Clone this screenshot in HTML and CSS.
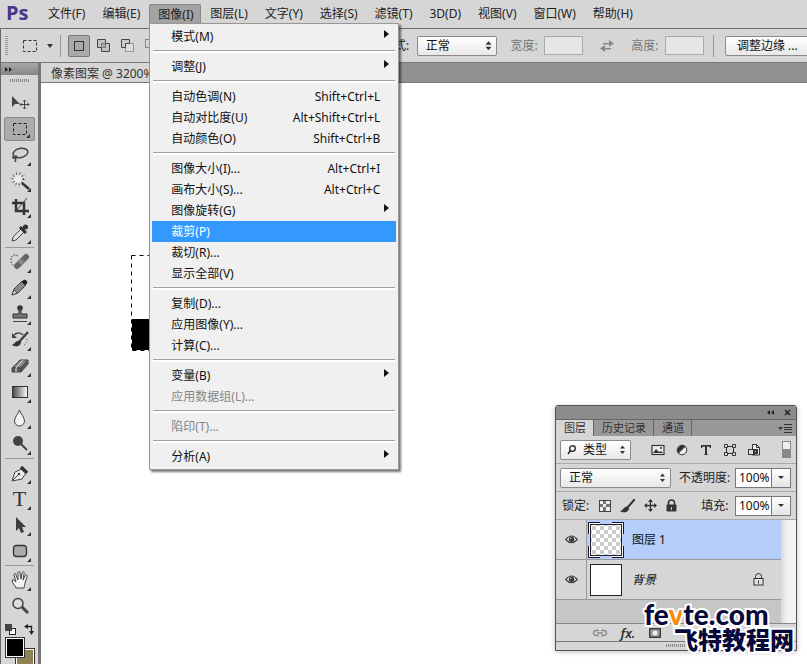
FILE: index.html
```html
<!DOCTYPE html>
<html lang="zh-CN">
<head>
<meta charset="utf-8">
<title>像素图案</title>
<link rel="stylesheet" href="styles.css">
</head>
<body>
<div class="app">
  <nav class="menubar">
    <span class="logo">Ps</span>
    <div class="menu"><button>文件(F)</button></div>
    <div class="menu"><button>编辑(E)</button></div>
    <div class="menu open"><button>图像(I)</button>
      <ul class="dropdown">
        <li><button class="sub">模式(M)</button></li>
        <li class="line"></li>
        <li><button class="sub">调整(J)</button></li>
        <li class="line"></li>
        <li><button>自动色调(N)<kbd>Shift+Ctrl+L</kbd></button></li>
        <li><button>自动对比度(U)<kbd>Alt+Shift+Ctrl+L</kbd></button></li>
        <li><button>自动颜色(O)<kbd>Shift+Ctrl+B</kbd></button></li>
        <li class="line"></li>
        <li><button>图像大小(I)...<kbd>Alt+Ctrl+I</kbd></button></li>
        <li><button>画布大小(S)...<kbd>Alt+Ctrl+C</kbd></button></li>
        <li><button class="sub">图像旋转(G)</button></li>
        <li><button class="current">裁剪(P)</button></li>
        <li><button>裁切(R)...</button></li>
        <li><button>显示全部(V)</button></li>
        <li class="line"></li>
        <li><button>复制(D)...</button></li>
        <li><button>应用图像(Y)...</button></li>
        <li><button>计算(C)...</button></li>
        <li class="line"></li>
        <li><button class="sub">变量(B)</button></li>
        <li><button disabled>应用数据组(L)...</button></li>
        <li class="line"></li>
        <li><button disabled>陷印(T)...</button></li>
        <li class="line"></li>
        <li><button class="sub">分析(A)</button></li>
      </ul>
    </div>
    <div class="menu"><button>图层(L)</button></div>
    <div class="menu"><button>文字(Y)</button></div>
    <div class="menu"><button>选择(S)</button></div>
    <div class="menu"><button>滤镜(T)</button></div>
    <div class="menu"><button>3D(D)</button></div>
    <div class="menu"><button>视图(V)</button></div>
    <div class="menu"><button>窗口(W)</button></div>
    <div class="menu"><button>帮助(H)</button></div>
  </nav>

  <div class="options">
    <div class="modes">
      <span class="grip"></span>
      <button class="preset" aria-label="矩形选框"><svg width="32" height="14" viewBox="0 0 32 14"><rect x="1.500" y="1.500" width="13" height="11" fill="none" stroke="#333" stroke-dasharray="3 2"/><path d="M25 5h6l-3 4z" fill="#333"/></svg></button>
      <span class="divider"></span>
      <button class="mode on" aria-label="新选区"><svg width="14" height="14" viewBox="0 0 14 14"><rect x="2.500" y="2.500" width="9" height="9" fill="#aaa" stroke="#333"/></svg></button>
      <button class="mode" aria-label="添加到选区"><svg width="14" height="14" viewBox="0 0 14 14"><path d="M.5.5h8v4h4v8h-8v-4h-4z" fill="#c2c2c2" stroke="#444"/><path d="M4.500 8.500v-4h4v4z" fill="#aaa" stroke="#777"/></svg></button>
      <button class="mode" aria-label="从选区减去"><svg width="14" height="14" viewBox="0 0 14 14"><rect x="4.500" y="4.500" width="8" height="8" fill="#ddd" stroke="#999"/><path d="M.5.5h8v4h-4v4h-4z" fill="#ccc" stroke="#444"/></svg></button>
      <button class="mode" aria-label="与选区交叉"><svg width="14" height="14" viewBox="0 0 14 14"><rect x=".5" y=".5" width="8" height="8" fill="none" stroke="#888"/><rect x="4.500" y="4.500" width="8" height="8" fill="none" stroke="#888"/></svg></button>
    </div>
    <label for="style">样式:</label>
    <span class="pick style"><select id="style"><option>正常</option></select><svg width="7" height="10" viewBox="0 0 7 10"><path d="M1 3.500L3.500.5 6 3.500zM1 6h5L3.500 9z" fill="#333" stroke="#333" stroke-width=".5"/></svg></span>
    <label class="dim" for="w">宽度:</label><input class="size" id="w" disabled>
    <button class="swap" aria-label="交换"><svg width="16" height="14" viewBox="0 0 16 14"><path d="M4 4h6V1l5 3.500L10 8V5.500H4zM12 9H6V6L1 9.500 6 13v-2.500h6z" fill="#8a8a8a"/></svg></button>
    <label class="dim" for="h">高度:</label><input class="size" id="h" disabled>
    <span class="divider end"></span>
    <button class="refine">调整边缘 ...</button>
  </div>

  <div class="work">
    <aside class="tools">
      <div class="toolhead"><svg width="8" height="5" viewBox="0 0 8 5"><path d="M0 0l3 2.500L0 5zM4 0l3 2.500L4 5z" fill="#222"/></svg></div>
      <div class="toolgrip"></div>
      <button class="tool plain" aria-label="移动"><svg viewBox="0 0 20 20"><path d="M2 3v11l3-3h5z" fill="#444"/><path d="M14.500 7v9M10 11.500h9M13 8.500L14.500 7 16 8.500M13 14.500l1.500 1.500 1.500-1.500M11.500 10L10 11.500l1.500 1.500M17.500 10l1.500 1.500-1.500 1.500" fill="none" stroke="#444"/></svg></button>
      <button class="tool on" aria-label="矩形选框"><svg viewBox="0 0 20 20"><rect x="3.500" y="4.500" width="13" height="11" fill="none" stroke="#222" stroke-dasharray="3 2"/></svg></button>
      <button class="tool" aria-label="套索"><svg viewBox="0 0 20 20"><g fill="none" stroke="#444" stroke-width="1.500"><ellipse cx="10.500" cy="8" rx="7.500" ry="4.500" transform="rotate(-12 10.500 8)"/><path d="M4 11c-2 1-1 3 1 2s2-2 0-2M5 13c1 1 1 2 0 4"/></g></svg></button>
      <button class="tool" aria-label="魔棒"><svg viewBox="0 0 20 20"><circle cx="8" cy="8" r="5" fill="#ededed" stroke="#555" stroke-width="2" stroke-dasharray="1 2"/><circle cx="8" cy="8" r="7" fill="none" stroke="#777" stroke-dasharray="1 3.400"/><path d="M12 12l7 6" stroke="#333" stroke-width="2.500"/></svg></button>
      <button class="tool" aria-label="裁剪"><svg viewBox="0 0 20 20"><path d="M6 2v12h13M2 6h12v12" fill="none" stroke="#333" stroke-width="2.500"/><path d="M6 14L17 1" stroke="#444"/></svg></button>
      <button class="tool" aria-label="吸管"><svg viewBox="0 0 20 20"><path d="M2 18l1-4 8-8 3 3-8 8z" fill="#ddd" stroke="#444"/><path d="M10 4l6 6M12 7l4-4" stroke="#333" stroke-width="3"/><circle cx="15.500" cy="4" r="2.500" fill="#333"/></svg></button>
      <hr>
      <button class="tool" aria-label="修复画笔"><svg viewBox="0 0 20 20"><path d="M8 4c-4-3-7 0-7 4 0 3 1 5 3 6" fill="none" stroke="#333" stroke-dasharray="1.500 1.500"/><path d="M7 14l9-9" stroke="#666" stroke-width="6" stroke-linecap="round"/><path d="M10 11l3-3" stroke="#aaa" stroke-width="5" stroke-dasharray="1 1"/></svg></button>
      <button class="tool" aria-label="铅笔"><svg viewBox="0 0 20 20"><path d="M2 17l2-6 8-8 4 4-8 8z" fill="#888" stroke="#444"/><path d="M2 17l2-5 3 3z" fill="#eee" stroke="#444"/><path d="M12 4l2-2q3 0 3 3l-2 2z" fill="#222" stroke="#222"/></svg></button>
      <button class="tool" aria-label="图章"><svg viewBox="0 0 20 20"><circle cx="10" cy="4" r="2.800" fill="#333"/><path d="M9 5h2v5h6v4H3v-4h6z" fill="#777" stroke="#333"/><path d="M3 17.500h14" stroke="#444"/></svg></button>
      <button class="tool" aria-label="历史记录画笔"><svg viewBox="0 0 20 20"><path d="M4 5c3-3 8-2 9 0" fill="none" stroke="#444" stroke-width="1.500"/><path d="M2 3v5h5z" fill="#444"/><path d="M18 2L9 12" stroke="#444" stroke-width="2.500"/><path d="M10 11c-4-1-5 3-8 4 4 3 9 1 9-3z" fill="#333"/><path d="M17 9c0 4-2 6-5 7" fill="none" stroke="#555" stroke-dasharray="1 2"/></svg></button>
      <button class="tool" aria-label="橡皮擦"><svg viewBox="0 0 20 20"><path d="M2 12l8-8h8l-7 8z" fill="#888" stroke="#444"/><path d="M2 12h9v4H2zM11 12l7-8v4l-7 8z" fill="#5c5c5c" stroke="#444"/><path d="M6 16v-4l7-8" fill="none" stroke="#ddd"/></svg></button>
      <button class="tool" aria-label="渐变"><svg viewBox="0 0 20 20"><defs><linearGradient id="ramp"><stop stop-color="#444"/><stop offset="1" stop-color="#fff"/></linearGradient></defs><rect x="2.500" y="4.500" width="15" height="11" fill="url(#ramp)" stroke="#333"/></svg></button>
      <button class="tool" aria-label="模糊"><svg viewBox="0 0 20 20"><path d="M9.500 2c-1 4-5 7-5 11a5 5 0 0 0 10 0c0-4-4-7-5-11z" fill="#f4f4f4" stroke="#444"/></svg></button>
      <button class="tool" aria-label="减淡"><svg viewBox="0 0 20 20"><circle cx="8" cy="7" r="5" fill="#444"/><path d="M11 10l6 6" stroke="#444" stroke-width="2"/></svg></button>
      <hr>
      <button class="tool" aria-label="钢笔"><svg viewBox="0 0 20 20"><path d="M2 18L5 9l7-3 4 4-4 6z" fill="#eee" stroke="#444"/><path d="M3 17l5-5" stroke="#444"/><circle cx="9" cy="11" r="1.300" fill="#444"/><path d="M11 4l6 6" stroke="#333" stroke-width="3.500"/></svg></button>
      <button class="tool type" aria-label="文字">T</button>
      <button class="tool" aria-label="路径选择"><svg viewBox="0 0 20 20"><path d="M6 2v14l3-3 2 5 3-1-2-5h4z" fill="#3b3b3b"/></svg></button>
      <button class="tool" aria-label="圆角矩形"><svg viewBox="0 0 20 20"><rect x="3.500" y="4.500" width="13" height="11" rx="3" fill="#aaa" stroke="#333" stroke-width="1.300"/></svg></button>
      <hr>
      <button class="tool" aria-label="抓手"><svg viewBox="0 0 20 20"><path d="M6 18c-1-3-4-5-4-8 1-1 2 0 4 2L4 5c0-2 2-2 2 0l2 5V3c0-2 2-2 2 0l1 6 1-6c1-2 3-1 2 1l-1 6 2-4c1-2 3-1 2 1l-2 6c0 2-1 3-1 5z" fill="#f2f2f2" stroke="#444"/></svg></button>
      <button class="tool plain" aria-label="缩放"><svg viewBox="0 0 20 20"><circle cx="8" cy="7.500" r="5" fill="#ddd" stroke="#444" stroke-width="1.500"/><path d="M12 11l6 6" stroke="#444" stroke-width="3"/></svg></button>
      <div class="swaps">
        <button aria-label="默认颜色"><svg width="11" height="11" viewBox="0 0 11 11"><rect x="4.500" y="4.500" width="6" height="6" fill="#fff" stroke="#222"/><rect width="7" height="7" fill="#444"/></svg></button>
        <button aria-label="切换颜色"><svg width="11" height="11" viewBox="0 0 11 11"><path d="M3 2.500h4.500V8" fill="none" stroke="#222" stroke-width="1.300"/><path d="M0 2.500L4 0v5zM5 7h5l-2.500 4z" fill="#222"/></svg></button>
      </div>
      <div class="colors"><button class="bg" aria-label="背景色"></button><button class="fg" aria-label="前景色"></button></div>
    </aside>

    <main class="document">
      <div class="tabs"><a href="#canvas">像素图案 @ 3200%</a></div>
      <div class="canvas" id="canvas">
        <svg class="selection" width="96" height="96" viewBox="0 0 96 96"><path d="M1 64h95v31H1z"/><rect x=".5" y=".5" width="95" height="95" fill="none" stroke="#fff"/><rect x=".5" y=".5" width="95" height="95" fill="none" stroke="#000" stroke-dasharray="4 4"/></svg>
      </div>
    </main>
  </div>

  <section class="panel">
    <header><svg width="8" height="5" viewBox="0 0 8 5"><path d="M3 0L0 2.500 3 5zM7 0L4 2.500 7 5z" fill="#222"/></svg><svg width="7" height="7" viewBox="0 0 7 7"><path d="M1 1l5 5M6 1L1 6" stroke="#222" stroke-width="1.500"/></svg></header>
    <div class="paneltabs"><button class="on">图层</button><button>历史记录</button><button>通道</button><svg width="15" height="9" viewBox="0 0 15 9"><path d="M0 3h5L2.500 6zM6 0h8v1H6zM6 3h8v1H6zM6 5h8v1H6zM6 8h8v1H6z" fill="#333"/></svg></div>
    <div class="row">
      <span class="pick kind"><svg class="lens" width="9" height="10" viewBox="0 0 9 10"><circle cx="5.500" cy="3.500" r="2.800" fill="none" stroke="#222" stroke-width="1.300"/><path d="M3.500 5.500L1 9" stroke="#222" stroke-width="1.500"/></svg><select aria-label="类型"><option>类型</option></select><svg width="7" height="10" viewBox="0 0 7 10"><path d="M1 3.500L3.500.5 6 3.500zM1 6h5L3.500 9z" fill="#333"/></svg></span>
      <div class="filters">
        <svg width="14" height="14" viewBox="0 0 14 14"><rect x="1" y="2.500" width="12" height="9" fill="#eee" stroke="#333" stroke-width="1.200"/><path d="M2 10l3-4 3 3 2-1 2 2z" fill="#333"/><circle cx="10" cy="5" r="1" fill="#333"/></svg>
        <svg width="14" height="14" viewBox="0 0 14 14"><circle cx="7" cy="7" r="4.800" fill="#eee" stroke="#333"/><path d="M10.500 3.500A5 5 0 0 0 3.500 10.500z" fill="#333"/></svg>
        <svg width="14" height="14" viewBox="0 0 14 14"><path d="M2 2h10v3h-1q0-1.500-1.500-1.500H8V11l1.500 1H4.500L6 11V3.500H4.500Q3 3.500 3 5H2z" fill="#333"/></svg>
        <svg width="14" height="14" viewBox="0 0 14 14"><path d="M3.500 3.500h7v7h-7z" fill="none" stroke="#333"/><path d="M1.500 1.500h3v3h-3zM9.500 1.500h3v3h-3zM1.500 9.500h3v3h-3zM9.500 9.500h3v3h-3z" fill="#ddd" stroke="#333"/></svg>
        <svg width="14" height="14" viewBox="0 0 14 14"><path d="M5.500 6V1.500h4l3 3V12h-7" fill="#eee" stroke="#333"/><path d="M9.500 1.500v3h3" fill="none" stroke="#333"/><rect x="1.500" y="6.500" width="6" height="5" fill="#ddd" stroke="#333"/><path d="M6 6h5v5H6z" fill="#333"/><path d="M8 8h1v1H8z" fill="#eee"/></svg>
      </div>
      <button class="toggle" aria-label="过滤开关"></button>
    </div>
    <div class="row">
      <span class="pick blend"><select aria-label="混合模式"><option>正常</option></select><svg width="7" height="10" viewBox="0 0 7 10"><path d="M1 3.500L3.500.5 6 3.500zM1 6h5L3.500 9z" fill="#333"/></svg></span>
      <label for="opacity">不透明度:</label>
      <span class="amount"><input id="opacity" value="100%"><button aria-label="调整不透明度"></button></span>
    </div>
    <div class="row">
      <span class="lockname">锁定:</span>
      <div class="locks">
        <svg width="12" height="12" viewBox="0 0 12 12"><rect x=".5" y=".5" width="11" height="11" fill="#eee" stroke="#444"/><path d="M4 1h3v3H4zM1 4h3v3H1zM7 4h4v3H7zM4 7h3v4H4z" fill="#777"/></svg>
        <svg width="15" height="14" viewBox="0 0 15 14"><path d="M15 0L7 9" stroke="#333" stroke-width="2"/><path d="M8 8C4 7 4 11 0 12c4 3 9 1 9-3z" fill="#333"/></svg>
        <svg width="13" height="13" viewBox="0 0 13 13"><path d="M6.500 1v11M1 6.500h11" stroke="#333" stroke-width="1.300"/><path d="M6.500 0L9 3H4zM6.500 13L9 10H4zM0 6.500L3 4v5zM13 6.500L10 4v5z" fill="#333"/></svg>
        <svg width="11" height="13" viewBox="0 0 11 13"><path d="M2.500 6V4a3 3 0 0 1 6 0v2" fill="none" stroke="#333" stroke-width="1.600"/><rect x=".5" y="5.500" width="10" height="7" rx="1" fill="#333"/><path d="M5 8h1v3H5z" fill="#ccc"/></svg>
      </div>
      <label for="fill">填充:</label>
      <span class="amount"><input id="fill" value="100%"><button aria-label="调整填充"></button></span>
    </div>
    <div class="layers">
      <div class="list">
        <div class="layer on"><button class="eye" aria-label="可见"><svg width="13" height="9" viewBox="0 0 13 9"><path d="M.7 4.500Q6.500-2.500 12.300 4.500 6.500 11 .7 4.500z" fill="#ddd" stroke="#444" stroke-width="1.200"/><circle cx="6.500" cy="4.300" r="2.600" fill="#333"/><circle cx="5.800" cy="3.500" r=".8" fill="#ddd"/></svg></button><div class="entry"><svg class="thumb" width="36" height="36" viewBox="0 0 36 36"><defs><pattern id="checks" width="8" height="8" patternUnits="userSpaceOnUse"><path d="M0 0h8v8H0z" fill="#fff"/><path d="M0 0h4v4H0zM4 4h4v4H4z" fill="#ccc"/></pattern></defs><rect x="2.500" y="2.500" width="31" height="31" fill="url(#checks)" stroke="#223"/><path d="M.5 12V.5H12M24 .5h11.500V12M35.500 24v11.500H24M12 35.500H.5V24" fill="none" stroke="#112"/><path d="M1.500 12V1.500H12M24 1.500h10.500V12M34.500 24v10.500H24M12 34.500H1.500V24" fill="none" stroke="#fff"/></svg><span>图层 1</span></div></div>
        <div class="layer"><button class="eye" aria-label="可见"><svg width="13" height="9" viewBox="0 0 13 9"><path d="M.7 4.500Q6.500-2.500 12.300 4.500 6.500 11 .7 4.500z" fill="#ddd" stroke="#444" stroke-width="1.200"/><circle cx="6.500" cy="4.300" r="2.600" fill="#333"/><circle cx="5.800" cy="3.500" r=".8" fill="#ddd"/></svg></button><div class="entry"><svg class="thumb" width="36" height="36" viewBox="0 0 36 36"><rect x="2.500" y="2.500" width="31" height="31" fill="#fff" stroke="#222"/></svg><em>背景</em><svg class="locked" width="11" height="13" viewBox="0 0 11 13"><path d="M2.500 5V3.500a3 3 0 0 1 6 0V5" fill="none" stroke="#333"/><rect x="1" y="5.500" width="9" height="6.500" fill="#e4e4e4" stroke="#333"/><path d="M5 7.500h1v3H5z" fill="#333"/></svg></div></div>
      </div>
      <div class="scroll"></div>
    </div>
    <footer>
      <svg width="14" height="8" viewBox="0 0 14 8"><path d="M6 1.500H3a2.500 2.500 0 0 0 0 5h3M8 1.500h3a2.500 2.500 0 0 1 0 5H8M4 4h6" fill="none" stroke="#888" stroke-width="1.300"/></svg>
      <button class="fx">fx.</button>
      <svg width="12" height="10" viewBox="0 0 12 10"><rect x=".7" y=".7" width="10.600" height="8.600" fill="#999" stroke="#333" stroke-width="1.300"/><circle cx="6" cy="5" r="2.500" fill="#eee"/></svg>
    </footer>
    <div class="resize"></div>
  </section>

  <div class="mark"><b>fe<i>v</i>te.com</b><strong>飞特教程网</strong></div>
</div>
</body>
</html>
```
FILE: styles.css
```css
* { box-sizing: border-box; }

body {
  margin: 0;
  overflow: hidden;
  font: 12px/16px "Noto Sans", "Noto Sans CJK SC", sans-serif;
  color: #222;
}

button, input, select {
  margin: 0;
  padding: 0;
  border: 0;
  background: none;
  font: inherit;
  color: inherit;
}

svg { display: block; flex: none; }

.app {
  position: relative;
  display: flex;
  flex-direction: column;
  height: 100vh;
  background: #d6d6d6;
}

/* Menu bar */
.menubar {
  display: flex;
  gap: 1px;
  height: 29px;
  padding-top: 4px;
  border-bottom: 1px solid #6e6e6e;
  white-space: nowrap;
}

.logo {
  width: 39px;
  padding-left: 6px;
  font: bold 20px/18px "Open Sans", sans-serif;
  color: #46358c;
}

.menu { position: relative; height: 20px; }
.menu > button { display: block; height: 20px; padding: 0 8px; }
.menu.open > button { width: 52px; border: 1px solid #888; border-bottom: 0; border-radius: 2px 2px 0 0; background: #a3a3a3; }

.dropdown {
  position: absolute;
  z-index: 5;
  top: 19px;
  left: 0;
  width: 250px;
  margin: 0;
  padding: 2px;
  border: 1px solid #979797;
  background: #f0f0f0;
  box-shadow: 2px 2px 2px #0008;
  list-style: none;
}

.dropdown button {
  display: flex;
  justify-content: space-between;
  align-items: center;
  width: 100%;
  height: 21px;
  padding: 0 16px 0 19px;
  color: #111;
}

.dropdown kbd { font: inherit; }
.dropdown .sub { padding-right: 7px; }
.dropdown .sub::after {
  content: "";
  margin-bottom: 5px;
  border: solid transparent;
  border-width: 4px 0 4px 5px;
  border-left-color: #111;
}
.dropdown .current { background: #3399ff; color: #fff; }
.dropdown button:disabled { color: #858585; }
.line { height: 9px; padding-top: 3px; }
.line::before { content: ""; display: block; height: 2px; margin: 0 1px; border-top: 1px solid #a0a0a0; background: #fff; }

/* Options bar */
.options {
  display: flex;
  align-items: center;
  height: 34px;
  border-bottom: 1px solid #777;
  border-left: 1px solid #666;
  white-space: nowrap;
  overflow: hidden;
}

.modes { display: flex; align-items: center; flex: 0 0 381px; }
.grip { width: 3px; height: 20px; margin: 0 14px 0 4px; background: repeating-linear-gradient(#999 0 1px, transparent 1px 2px); }
.divider { width: 1px; height: 22px; margin: 0 7px 0 6px; background: #999; }
.mode { display: grid; place-items: center; width: 22px; height: 22px; margin-right: 2px; }
.mode.on { margin-right: 3px; border: 1px solid #777; border-radius: 2px; background: #aaa; }

.pick {
  display: flex;
  align-items: center;
  height: 20px;
  padding-right: 4px;
  border: 1px solid #8a8a8a;
  border-radius: 2px;
  background: linear-gradient(#fff, #e8e8e8);
  color: #111;
}
.pick select { flex: 1; min-width: 0; appearance: none; padding-left: 8px; }
.style { width: 81px; margin: 0 13px 0 7px; }
.options label { width: 28px; }
.options .dim { width: 34px; color: #777; }
.options .size { flex: none; width: 39px; height: 19px; border: 1px solid #aaa; background: #e6e6e6; }
.swap { margin: 0 16px; }
.divider.end { flex: none; margin: 0 11px 0 9px; }
.refine { flex: 1 0 90px; height: 20px; margin-right: -8px; padding-left: 11px; border: 1px solid #8a8a8a; border-radius: 2px; background: linear-gradient(#fff, #e8e8e8); color: #111; text-align: left; }

/* Work area */
.work { display: flex; flex: 1; min-height: 0; }

.tools {
  display: flex;
  flex-direction: column;
  align-items: center;
  width: 41px;
  border-left: 1px solid #666;
  border-right: 3px solid #777;
  overflow: hidden;
}
.tools > * { flex: none; }
.toolhead { width: 100%; height: 12px; padding: 4px; background: linear-gradient(#a8a8a8, #868686); }
.toolgrip { width: 20px; height: 3px; margin: 4px 0 8px; background: repeating-linear-gradient(90deg, #888 0 1px, transparent 1px 2px); }

.tool {
  position: relative;
  display: grid;
  place-items: center;
  width: 31px;
  height: 26px;
}
.tool svg { width: 20px; height: 20px; }
.tool::after {
  content: "";
  position: absolute;
  right: 4px;
  bottom: 2px;
  border: solid transparent;
  border-width: 0 0 4px 4px;
  border-bottom-color: #333;
}
.tool.plain::after { display: none; }
.tool.on { height: 24px; margin: 1px 0; border: 1px solid #888; border-radius: 2px; background: #acacac; }
.type { font: 22px/20px "Liberation Serif", serif; color: #333; }
.tools hr { width: 29px; height: 1px; margin: 1px 0; border: 0; background: #999; }
.swaps { display: flex; gap: 8px; height: 16px; padding-top: 4px; margin-bottom: 2px; }
.colors { display: grid; grid-template-columns: 10px 10px 10px; grid-template-rows: 11px 10px 10px; }
.fg, .bg { border: 1px solid #333; outline: 1px solid #fff; outline-offset: -2px; }
.fg { grid-area: 1 / 1 / 3 / 3; background: #000; }
.bg { grid-area: 2 / 2 / 4 / 4; background: #8f8152; }

.document { display: flex; flex-direction: column; flex: 1; min-width: 0; }
.tabs { height: 20px; border-bottom: 1px solid #777; background: #919191; }
.tabs a { display: block; width: 260px; height: 19px; padding: 3px 10px 0; background: #d6d6d6; color: #333; text-decoration: none; }
.canvas { position: relative; flex: 1; background: #fff; }
.selection { position: absolute; left: 90px; top: 172px; }

/* Layers panel */
.panel {
  position: absolute;
  top: 405px;
  right: 10px;
  width: 242px;
  border: 1px solid #555;
  border-radius: 3px 3px 0 0;
  background: #d6d6d6;
  box-shadow: 0 1px 5px #0004;
  white-space: nowrap;
}
.panel header { display: flex; justify-content: flex-end; align-items: center; gap: 9px; height: 13px; padding-right: 5px; background: #8c8c8c; }
.paneltabs { display: flex; height: 17px; border-top: 1px solid #666; background: #989898; }
.paneltabs button { height: 16px; padding: 0 7px 0 8px; border-right: 1px solid #666; font-size: 11px; color: #333; }
.paneltabs .on { background: #d6d6d6; }
.paneltabs svg { margin: 4px 3px 0 auto; }

.row { display: flex; align-items: center; height: 28px; padding: 0 5px 0 4px; border-bottom: 1px solid #aaa; }
.kind { width: 71px; }
.lens { margin-left: 6px; }
.kind select { padding-left: 7px; }
.filters { display: flex; gap: 10px; margin-left: 20px; }
.toggle { width: 9px; height: 17px; margin-left: auto; border: 1px solid #888; background: linear-gradient(#eee 50%, #888 50%); }
.blend { width: 111px; margin-right: 8px; }
.amount { display: flex; width: 56px; height: 20px; margin-left: auto; border: 1px solid #777; background: #fff; color: #111; }
.amount input { width: 35px; padding-left: 3px; }
.amount button { display: grid; place-items: center; flex: 1; border-left: 1px solid #777; background: linear-gradient(#fff, #e4e4e4); }
.amount button::after { content: ""; border: solid transparent; border-width: 3px 3px 0; border-top-color: #333; }
.lockname { padding-left: 2px; }
.locks { display: flex; align-items: center; gap: 9px; margin: 0 24px 0 10px; }

.layers { display: flex; height: 104px; border-bottom: 1px solid #888; background: #c6c6c6; }
.list { flex: 1; }
.layer { display: flex; height: 40px; border-bottom: 1px solid #999; background: #d6d6d6; }
.eye { display: grid; place-items: center; width: 31px; border-right: 1px solid #999; }
.entry { display: flex; align-items: center; flex: 1; padding: 0 17px 0 1px; color: #111; }
.on .entry { background: #b5cdfb; }
.thumb { margin-right: 8px; }
.locked { margin-left: auto; }
.scroll { width: 15px; background: linear-gradient(90deg, #d8d8d8, #f2f2f2 40%); }

.panel footer { display: flex; align-items: center; gap: 13px; height: 18px; padding-left: 37px; border-bottom: 1px solid #777; }
.fx { width: 16px; font: italic 600 13px/16px "Noto Sans", sans-serif; color: #333; }
.resize { display: flow-root; height: 8px; }
.resize::before { content: ""; display: block; width: 20px; height: 3px; margin: 2px auto 0; background: repeating-linear-gradient(90deg, #888 0 1px, transparent 1px 2px); }

/* Watermark */
.mark {
  position: absolute;
  top: 602px;
  right: 13px;
  display: flex;
  flex-direction: column;
  width: 150px;
  color: #08083a;
  -webkit-text-stroke: 4px #fff;
  paint-order: stroke fill;
  white-space: nowrap;
}
.mark b { font: 900 28px/25px Lato, sans-serif; }
.mark i { font-style: normal; color: #f58a0c; }
.mark strong { align-self: flex-end; font: 900 24px/24px "Noto Sans CJK SC", sans-serif; }
```
